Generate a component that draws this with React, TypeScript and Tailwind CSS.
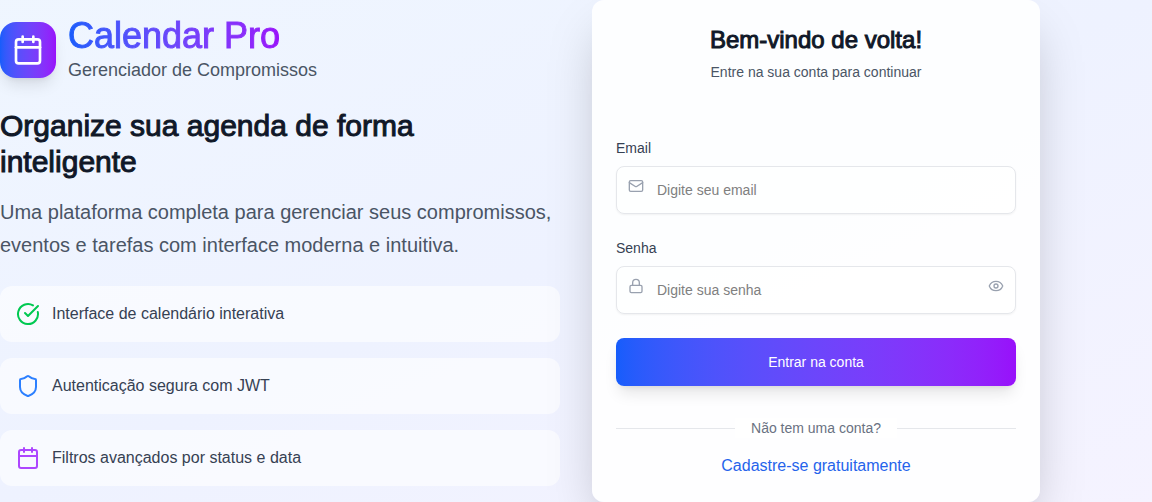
import { Calendar, CircleCheckBig, Eye, Lock, Mail, Shield } from "lucide-react";
import type { ReactNode } from "react";

function Feature({ icon, children }: { icon: ReactNode; children: ReactNode }) {
  return (
    <li className="flex items-center gap-3 rounded-xl bg-white/60 p-4">
      {icon}
      <span className="text-base text-gray-700">{children}</span>
    </li>
  );
}

const inputClass =
  "h-12 w-full rounded-lg border border-gray-200 bg-white/50 px-10 text-sm text-gray-900 shadow-xs outline-none placeholder:text-[#808080] focus:border-blue-500";

export default function App() {
  return (
    <div className="flex min-h-screen items-center justify-center overflow-hidden bg-linear-to-br from-blue-50 via-indigo-50 to-violet-50 font-['Liberation_Sans',Arial,sans-serif]">
      <main className="grid w-full max-w-6xl grid-cols-2 items-center gap-8">
        <section>
          <header className="mb-6 flex items-center gap-3">
            <div className="flex size-14 items-center justify-center rounded-2xl bg-linear-to-r from-blue-600 to-purple-600 text-white shadow-lg">
              <Calendar className="size-8" />
            </div>
            <div>
              <h1 className="w-fit bg-linear-to-r from-blue-600 to-purple-600 bg-clip-text text-4xl text-transparent [-webkit-text-stroke:1px_transparent]">
                Calendar Pro
              </h1>
              <p className="text-lg text-gray-600">Gerenciador de Compromissos</p>
            </div>
          </header>
          <h2 className="mb-4 max-w-lg text-3xl text-gray-900 [-webkit-text-stroke:1px]">
            Organize sua agenda de forma inteligente
          </h2>
          <p className="mb-6 text-xl leading-[33px] text-gray-600">
            Uma plataforma completa para gerenciar seus compromissos, eventos e tarefas com interface moderna e intuitiva.
          </p>
          <ul className="space-y-4">
            <Feature icon={<CircleCheckBig className="size-6 text-green-500" />}>
              Interface de calendário interativa
            </Feature>
            <Feature icon={<Shield className="size-6 text-blue-500" />}>Autenticação segura com JWT</Feature>
            <Feature icon={<Calendar className="size-6 text-purple-500" />}>
              Filtros avançados por status e data
            </Feature>
          </ul>
        </section>

        <section className="w-full max-w-md rounded-xl bg-white/90 p-6 shadow-2xl">
          <header className="mb-14 space-y-1.5 text-center">
            <h2 className="text-2xl text-gray-900 [-webkit-text-stroke:1px]">Bem-vindo de volta!</h2>
            <p className="text-sm text-gray-600">Entre na sua conta para continuar</p>
          </header>
          <form className="space-y-6" onSubmit={(event) => event.preventDefault()}>
            <div className="space-y-2">
              <label htmlFor="email" className="block text-sm text-gray-700">
                Email
              </label>
              <div className="relative">
                <Mail className="absolute top-3 left-3 size-4 text-gray-400" />
                <input id="email" type="email" placeholder="Digite seu email" className={inputClass} />
              </div>
            </div>
            <div className="space-y-2">
              <label htmlFor="password" className="block text-sm text-gray-700">
                Senha
              </label>
              <div className="relative">
                <Lock className="absolute top-3 left-3 size-4 text-gray-400" />
                <input id="password" type="password" placeholder="Digite sua senha" className={inputClass} />
                <button type="button" aria-label="Mostrar senha" className="absolute top-3 right-3 text-gray-400">
                  <Eye className="size-4" />
                </button>
              </div>
            </div>
            <button
              type="submit"
              className="h-12 w-full rounded-lg bg-linear-to-r from-blue-600 to-purple-600 text-sm text-white shadow-lg"
            >
              Entrar na conta
            </button>
          </form>
          <div className="mt-8 flex items-center">
            <span className="h-px flex-1 bg-gray-200" />
            <span className="bg-white px-4 text-sm text-gray-500">Não tem uma conta?</span>
            <span className="h-px flex-1 bg-gray-200" />
          </div>
          <p className="mt-4 text-center">
            <a href="#cadastro" className="text-base text-[#2563eb]">
              Cadastre-se gratuitamente
            </a>
          </p>
        </section>
      </main>
    </div>
  );
}
